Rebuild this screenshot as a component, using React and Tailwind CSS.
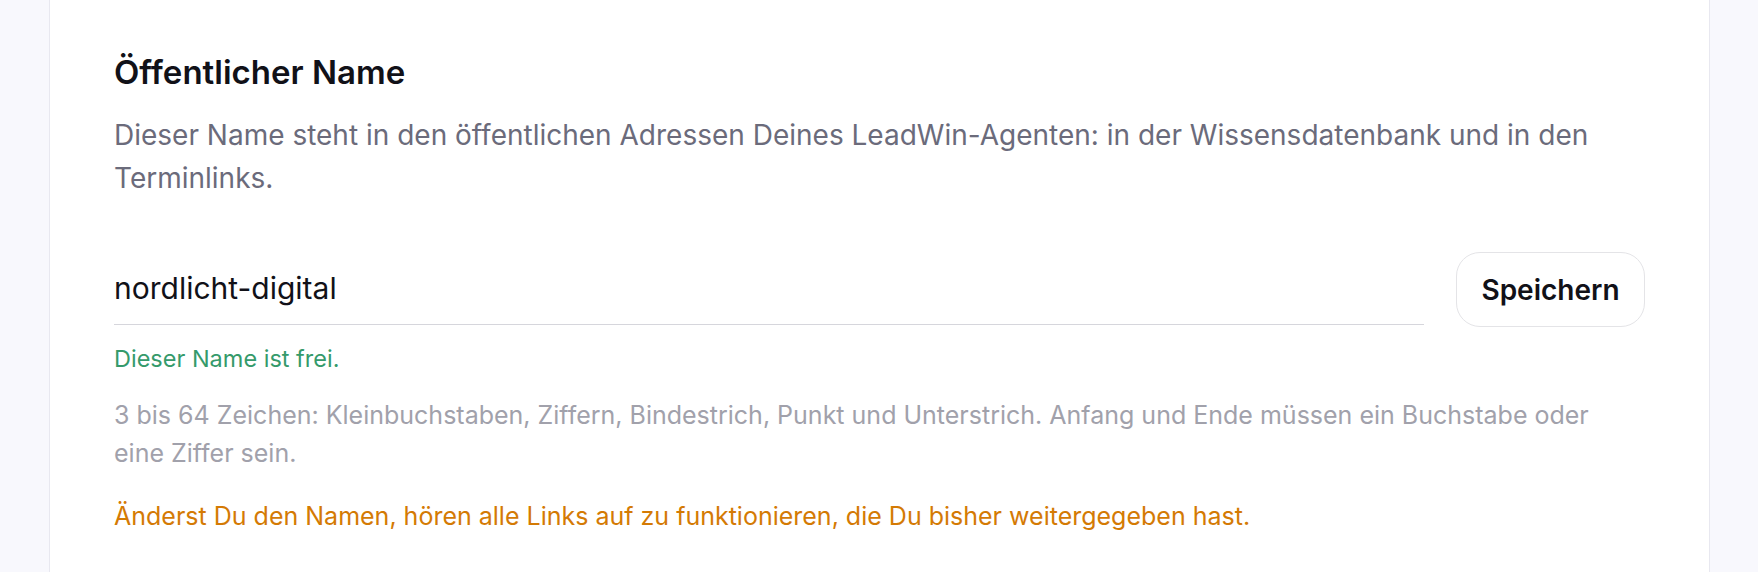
import { useState } from 'react';

const App = () => {
  const [name, setName] = useState('nordlicht-digital');

  return (
    <div className="min-h-screen bg-[#f8f8fd] pl-[49px] pr-[48px] font-['Inter','Noto_Sans',sans-serif]">
      <div className="min-h-[572px] bg-white border-x border-[#e8e8f0] px-[64px] pt-[52px] pb-[40px]">
        <h2 className="text-[33px] leading-[40px] font-semibold text-[#111118]">Öffentlicher Name</h2>
        <p className="mt-[22px] text-[28px] leading-[43px] text-[#6b6b7b]">
          Dieser Name steht in den öffentlichen Adressen Deines LeadWin-Agenten: in der Wissensdatenbank und in den
          Terminlinks.
        </p>

        {/* name field + save */}
        <div className="mt-[52px] flex items-start gap-[32px]">
          <div className="flex-1 h-[73px] border-b-[1.5px] border-[#d6d6dc] flex items-center">
            <input
              value={name}
              onChange={(e) => setName(e.target.value)}
              className="w-full bg-transparent outline-none text-[30px] text-[#111118]"
            />
          </div>
          <button className="w-[189px] h-[75px] rounded-[24px] border-[1.5px] border-[#e4e4e7] bg-white text-[28px] font-semibold text-[#111118]">
            Speichern
          </button>
        </div>

        <p className="mt-[14px] text-[23.5px] leading-[36px] text-[#359a6b]">Dieser Name ist frei.</p>
        <p className="mt-[19px] max-w-[1515px] text-[25px] leading-[38px] text-[#a1a1ab]">
          3 bis 64 Zeichen: Kleinbuchstaben, Ziffern, Bindestrich, Punkt und Unterstrich. Anfang und Ende müssen ein
          Buchstabe oder eine Ziffer sein.
        </p>
        <p className="mt-[26px] text-[25px] leading-[36px] text-[#d47a04]">
          Änderst Du den Namen, hören alle Links auf zu funktionieren, die Du bisher weitergegeben hast.
        </p>
      </div>
    </div>
  );
};

export default App;
